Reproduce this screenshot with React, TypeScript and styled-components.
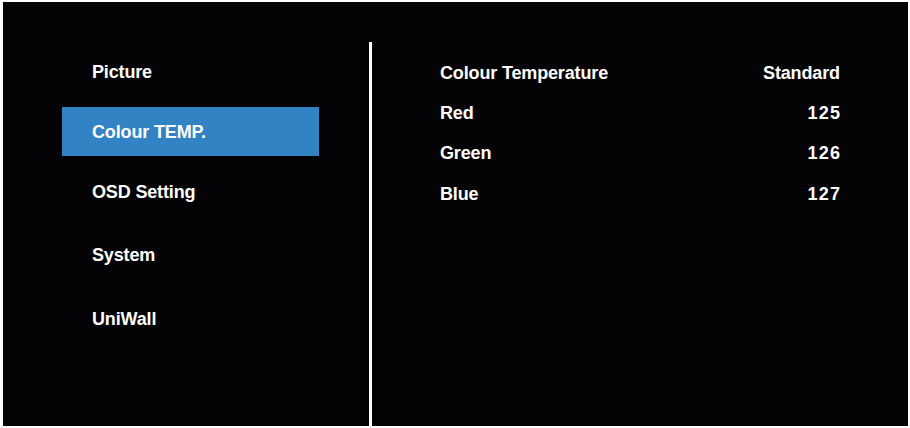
import React from "react";
import styled, { createGlobalStyle } from "styled-components";

const GlobalStyle = createGlobalStyle`
  html, body {
    margin: 0;
    padding: 0;
    background: #ffffff;
  }
  * {
    box-sizing: border-box;
  }
`;

const Screen = styled.div`
  width: 910px;
  height: 428px;
  background: #030306;
  border-style: solid;
  border-color: #ffffff;
  border-width: 2px 2px 2px 3px;
  display: grid;
  grid-template-columns: 366px 1fr;
  font-family: "Liberation Sans", Arial, sans-serif;
  font-weight: 700;
  font-size: 18px;
  letter-spacing: -0.15px;
  color: #ffffff;
  overflow: hidden;
`;

const Menu = styled.nav`
  display: flex;
  flex-direction: column;
  gap: 10.65px;
  padding: 45.4px 0 0 59px;
`;

interface MenuItemProps {
  $active?: boolean;
}

const MenuItem = styled.div<MenuItemProps>`
  width: 257px;
  height: 49px;
  padding: 2px 0 0 30px;
  line-height: 47px;
  white-space: nowrap;
  background: ${(props) => (props.$active ? "#3283c4" : "transparent")};
  &:nth-child(n + 4) {
    margin-top: 3.8px;
  }
`;

const Panel = styled.section`
  margin-top: 40px;
  border-left: 3px solid #ffffff;
  padding: 10.5px 68px 0 68px;
  display: flex;
  flex-direction: column;
`;

const Row = styled.div`
  display: flex;
  justify-content: space-between;
  align-items: center;
  height: 40.3px;
  line-height: 40px;
  white-space: nowrap;
`;

interface ValueProps {
  $numeric?: boolean;
}

const Value = styled.span<ValueProps>`
  letter-spacing: ${(props) => (props.$numeric ? "1.25px" : "-0.15px")};
  margin-right: ${(props) => (props.$numeric ? "-1.25px" : "0.15px")};
`;

const menu = ["Picture", "Colour TEMP.", "OSD Setting", "System", "UniWall"];

const settings = [
  { label: "Colour Temperature", value: "Standard" },
  { label: "Red", value: "125" },
  { label: "Green", value: "126" },
  { label: "Blue", value: "127" },
];

const App = () => {
  return (
    <>
      <GlobalStyle />
      <Screen>
        <Menu>
          {menu.map((item) => (
            <MenuItem key={item} $active={item === "Colour TEMP."}>
              {item}
            </MenuItem>
          ))}
        </Menu>
        <Panel>
          {settings.map((s) => (
            <Row key={s.label}>
              <span>{s.label}</span>
              <Value $numeric={/^\d+$/.test(s.value)}>{s.value}</Value>
            </Row>
          ))}
        </Panel>
      </Screen>
    </>
  );
};

export default App;
